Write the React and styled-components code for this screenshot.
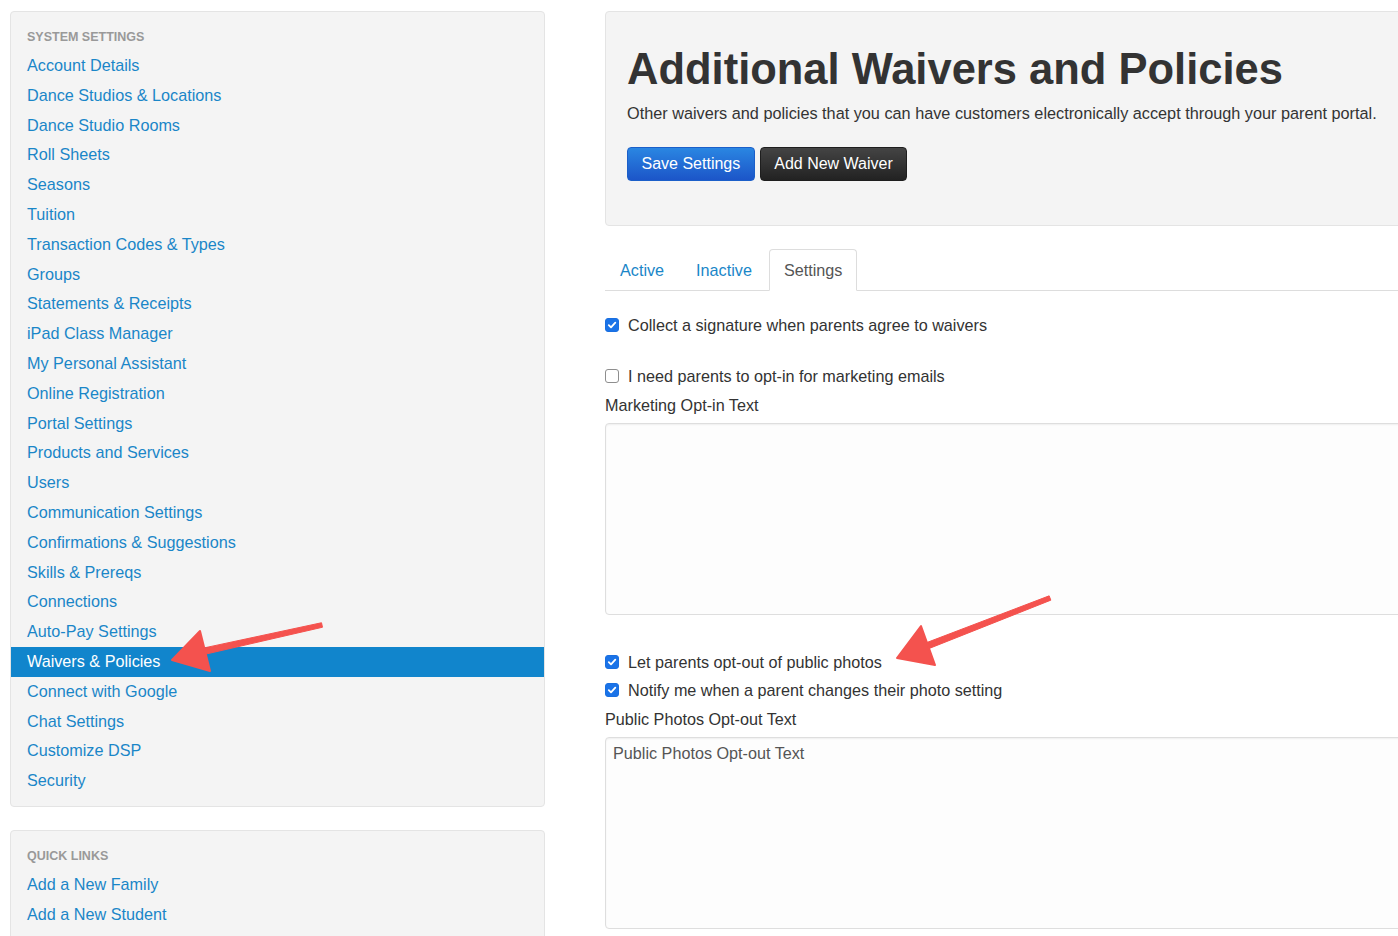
import React from "react";
import styled, { createGlobalStyle } from "styled-components";

const Global = createGlobalStyle`
  html, body {
    margin: 0;
    padding: 0;
    background: #ffffff;
    overflow: hidden;
    font-family: "Liberation Sans", Arial, Helvetica, sans-serif;
    color: #333333;
  }
  * { box-sizing: border-box; }
`;

const Page = styled.div`
  position: relative;
  width: 1398px;
  height: 936px;
  overflow: hidden;
  display: flex;
  align-items: flex-start;
  gap: 60px;
  padding: 11px 0 0 10px;
`;

const Sidebar = styled.aside`
  flex: 0 0 535px;
  display: flex;
  flex-direction: column;
  gap: 23px;
`;

const Panel = styled.div`
  background: #f4f4f4;
  border: 1px solid #e4e4e4;
  border-radius: 4px;
  padding: 18px 0 ${(p) => p.$pb || 10}px;
`;

const PanelHeader = styled.div`
  font-size: 12.5px;
  line-height: 14px;
  font-weight: 700;
  color: #999999;
  text-transform: uppercase;
  padding: 0 16px;
  margin-bottom: 7px;
`;

const NavLink = styled.a`
  display: block;
  height: 29.8px;
  line-height: 29.8px;
  padding: 0 16px;
  font-size: 16.2px;
  color: ${(p) => (p.$active ? "#ffffff" : "#1a86c8")};
  background: ${(p) => (p.$active ? "#1185cc" : "transparent")};
  text-decoration: none;
  white-space: nowrap;
`;

const Main = styled.main`
  flex: 0 0 830px;
  display: flex;
  flex-direction: column;
`;

const Hero = styled.section`
  background: #f4f4f4;
  border: 1px solid #e4e4e4;
  border-radius: 4px;
  height: 215px;
  padding: 33px 0 0 21px;
`;

const Title = styled.h1`
  margin: 0;
  font-size: 43.5px;
  line-height: 48px;
  font-weight: 700;
  color: #333333;
`;

const Lead = styled.p`
  margin: 10px 0 0;
  font-size: 16.25px;
  line-height: 20px;
  color: #333333;
`;

const ButtonRow = styled.div`
  display: flex;
  gap: 5px;
  margin-top: 24px;
`;

const Button = styled.button`
  height: 34px;
  padding: 0 13.5px;
  border-radius: 4px;
  font-family: inherit;
  font-size: 16px;
  color: #ffffff;
  cursor: pointer;
  border: 1px solid ${(p) => (p.$variant === "primary" ? "#1b5fc9" : "#1e1e1e")};
  background: ${(p) =>
    p.$variant === "primary"
      ? "linear-gradient(to bottom, #2a86e2, #1c55c8)"
      : "linear-gradient(to bottom, #444444, #222222)"};
`;

const Tabs = styled.nav`
  display: flex;
  align-items: flex-end;
  gap: 2px;
  margin-top: 23px;
  border-bottom: 1px solid #dddddd;
  height: 42px;
`;

const Tab = styled.a`
  display: block;
  height: 42px;
  line-height: 41px;
  padding: 0 14px;
  font-size: 16.2px;
  text-decoration: none;
  border: 1px solid ${(p) => (p.$active ? "#dddddd" : "transparent")};
  border-bottom-color: ${(p) => (p.$active ? "#ffffff" : "transparent")};
  border-radius: 4px 4px 0 0;
  background: ${(p) => (p.$active ? "#ffffff" : "transparent")};
  color: ${(p) => (p.$active ? "#555555" : "#1a86c8")};
  margin-bottom: -1px;
`;

const Form = styled.div`
  display: flex;
  flex-direction: column;
  padding-top: 24px;
`;

const CheckRow = styled.label`
  display: flex;
  align-items: center;
  gap: 9px;
  height: 20px;
  font-size: 16.2px;
  color: #333333;
  margin-top: ${(p) => p.$mt || 0}px;
`;

const Box = styled.span`
  flex: 0 0 14px;
  width: 14px;
  height: 14px;
  border-radius: 3px;
  display: inline-flex;
  align-items: center;
  justify-content: center;
  background: ${(p) => (p.$checked ? "#1a73e8" : "#ffffff")};
  border: 1px solid ${(p) => (p.$checked ? "#1a6fe0" : "#8e8e8e")};
`;

const FieldLabel = styled.div`
  font-size: 16.2px;
  line-height: 20px;
  color: #333333;
  margin-top: 9px;
`;

const TextArea = styled.div`
  margin-top: 8px;
  height: 192px;
  border: 1px solid #dedede;
  border-radius: 4px;
  background: #fdfdfd;
  box-shadow: inset 0 1px 2px rgba(0, 0, 0, 0.06);
  padding: 5px 7px;
  font-size: 16.2px;
  line-height: 20px;
  color: #555555;
`;

const Overlay = styled.svg`
  position: absolute;
  left: 0;
  top: 0;
  pointer-events: none;
`;

function Check({ checked }) {
  return (
    <Box $checked={checked}>
      {checked && (
        <svg width="10" height="10" viewBox="0 0 10 10">
          <path d="M1.8 5.2 L4 7.4 L8.3 2.6" fill="none" stroke="#fff" strokeWidth="1.8" strokeLinecap="round" strokeLinejoin="round" />
        </svg>
      )}
    </Box>
  );
}

const systemLinks = [
  "Account Details",
  "Dance Studios & Locations",
  "Dance Studio Rooms",
  "Roll Sheets",
  "Seasons",
  "Tuition",
  "Transaction Codes & Types",
  "Groups",
  "Statements & Receipts",
  "iPad Class Manager",
  "My Personal Assistant",
  "Online Registration",
  "Portal Settings",
  "Products and Services",
  "Users",
  "Communication Settings",
  "Confirmations & Suggestions",
  "Skills & Prereqs",
  "Connections",
  "Auto-Pay Settings",
  "Waivers & Policies",
  "Connect with Google",
  "Chat Settings",
  "Customize DSP",
  "Security",
];

function Arrow({ tail, tip, c1, c2 }) {
  const mid = [(c1[0] + c2[0]) / 2, (c1[1] + c2[1]) / 2];
  const dx = tail[0] - mid[0];
  const dy = tail[1] - mid[1];
  const len = Math.hypot(dx, dy);
  const nx = -dy / len;
  const ny = dx / len;
  const wBase = 3.2;
  const wTail = 2.3;
  const shaft = [
    [mid[0] + nx * wBase, mid[1] + ny * wBase],
    [tail[0] + nx * wTail, tail[1] + ny * wTail],
    [tail[0] - nx * wTail, tail[1] - ny * wTail],
    [mid[0] - nx * wBase, mid[1] - ny * wBase],
  ];
  return (
    <g fill="#f4524e" stroke="#f4524e" strokeLinejoin="round">
      <polygon points={shaft.map((p) => p.join(",")).join(" ")} strokeWidth="1" />
      <polygon points={[tip, c1, c2].map((p) => p.join(",")).join(" ")} strokeWidth="2" />
    </g>
  );
}

export default function App() {
  return (
    <>
      <Global />
      <Page>
        <Sidebar>
          <Panel $pb={10}>
            <PanelHeader>System Settings</PanelHeader>
            {systemLinks.map((l) => (
              <NavLink key={l} href="#" $active={l === "Waivers & Policies"}>
                {l}
              </NavLink>
            ))}
          </Panel>
          <Panel $pb={20}>
            <PanelHeader>Quick Links</PanelHeader>
            <NavLink href="#">Add a New Family</NavLink>
            <NavLink href="#">Add a New Student</NavLink>
          </Panel>
        </Sidebar>
        <Main>
          <Hero>
            <Title>Additional Waivers and Policies</Title>
            <Lead>
              Other waivers and policies that you can have customers electronically accept through your parent portal.
            </Lead>
            <ButtonRow>
              <Button $variant="primary">Save Settings</Button>
              <Button>Add New Waiver</Button>
            </ButtonRow>
          </Hero>
          <Tabs>
            <Tab href="#">Active</Tab>
            <Tab href="#">Inactive</Tab>
            <Tab href="#" $active>
              Settings
            </Tab>
          </Tabs>
          <Form>
            <CheckRow>
              <Check checked />
              Collect a signature when parents agree to waivers
            </CheckRow>
            <CheckRow $mt={31}>
              <Check checked={false} />
              I need parents to opt-in for marketing emails
            </CheckRow>
            <FieldLabel>Marketing Opt-in Text</FieldLabel>
            <TextArea />
            <CheckRow $mt={37}>
              <Check checked />
              Let parents opt-out of public photos
            </CheckRow>
            <CheckRow $mt={8}>
              <Check checked />
              Notify me when a parent changes their photo setting
            </CheckRow>
            <FieldLabel>Public Photos Opt-out Text</FieldLabel>
            <TextArea>Public Photos Opt-out Text</TextArea>
          </Form>
        </Main>
        <Overlay width="1398" height="936" viewBox="0 0 1398 936">
          <Arrow tail={[322, 625]} tip={[172, 660]} c1={[200, 631]} c2={[210, 671]} />
          <Arrow tail={[1050, 598]} tip={[897, 658]} c1={[921, 626]} c2={[935, 665]} />
        </Overlay>
      </Page>
    </>
  );
}
